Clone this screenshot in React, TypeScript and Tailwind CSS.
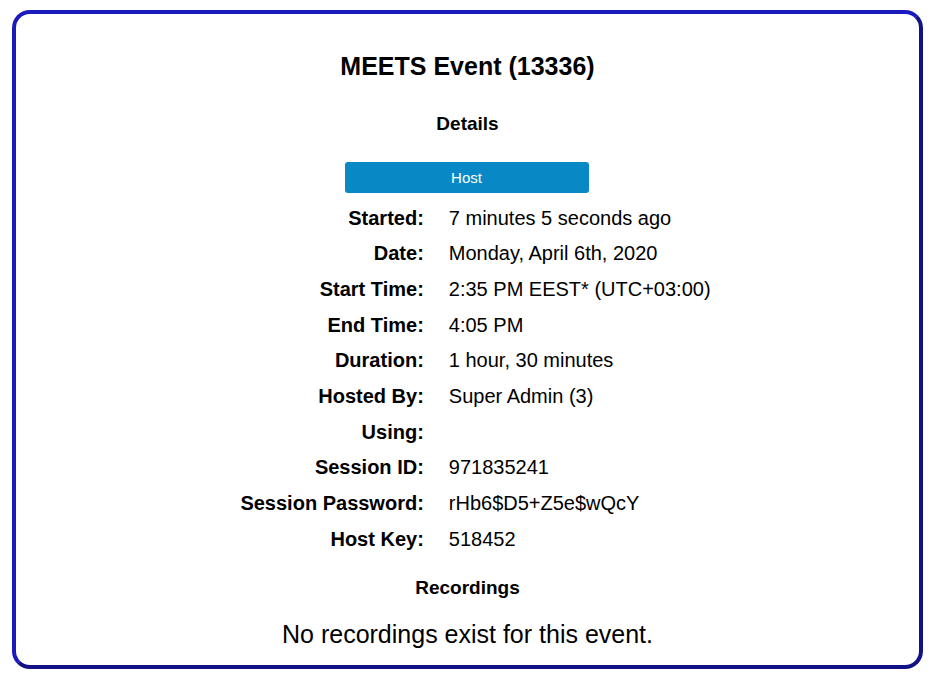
const DETAILS = [
  { label: 'Started:', value: '7 minutes 5 seconds ago' },
  { label: 'Date:', value: 'Monday, April 6th, 2020' },
  { label: 'Start Time:', value: '2:35 PM EEST* (UTC+03:00)' },
  { label: 'End Time:', value: '4:05 PM' },
  { label: 'Duration:', value: '1 hour, 30 minutes' },
  { label: 'Hosted By:', value: 'Super Admin (3)' },
  { label: 'Using:', value: '' },
  { label: 'Session ID:', value: '971835241' },
  { label: 'Session Password:', value: 'rHb6$D5+Z5e$wQcY' },
  { label: 'Host Key:', value: '518452' },
]

export default function App() {
  return (
    <div className="w-[932px] h-[678px] bg-white pt-[10px] pl-[12px] font-['Liberation_Sans',Arial,sans-serif] text-black">
      {/* Event card */}
      <div className="w-[911px] h-[659px] rounded-[18px] border-4 border-t-[#1a1abd] border-l-[#1a1abd] border-r-[#121287] border-b-[#121287] flex flex-col items-center">
        <h1 className="mt-[37px] text-[25px] leading-[30px] font-bold">MEETS Event (13336)</h1>

        <h2 className="mt-[31px] text-[19px] leading-[24px] font-bold">Details</h2>

        <button className="mt-[26px] mr-[2px] w-[244px] h-[31px] rounded-[3px] bg-[#0889c6] text-white text-[15px] leading-[31px]">
          Host
        </button>

        {/* Details table */}
        <div className="mt-[7px] ml-[16px] grid grid-cols-[max-content_max-content] auto-rows-[35.67px] gap-x-[25px] items-center text-[20px] leading-[24px] whitespace-nowrap">
          {DETAILS.map(d => (
            <div key={d.label} className="contents">
              <span className="font-bold text-right">{d.label}</span>
              <span>{d.value}</span>
            </div>
          ))}
        </div>

        <h2 className="mt-[19px] text-[19px] leading-[24px] font-bold">Recordings</h2>

        <p className="mt-[19px] text-[25px] leading-[30px]">No recordings exist for this event.</p>
      </div>
    </div>
  )
}
